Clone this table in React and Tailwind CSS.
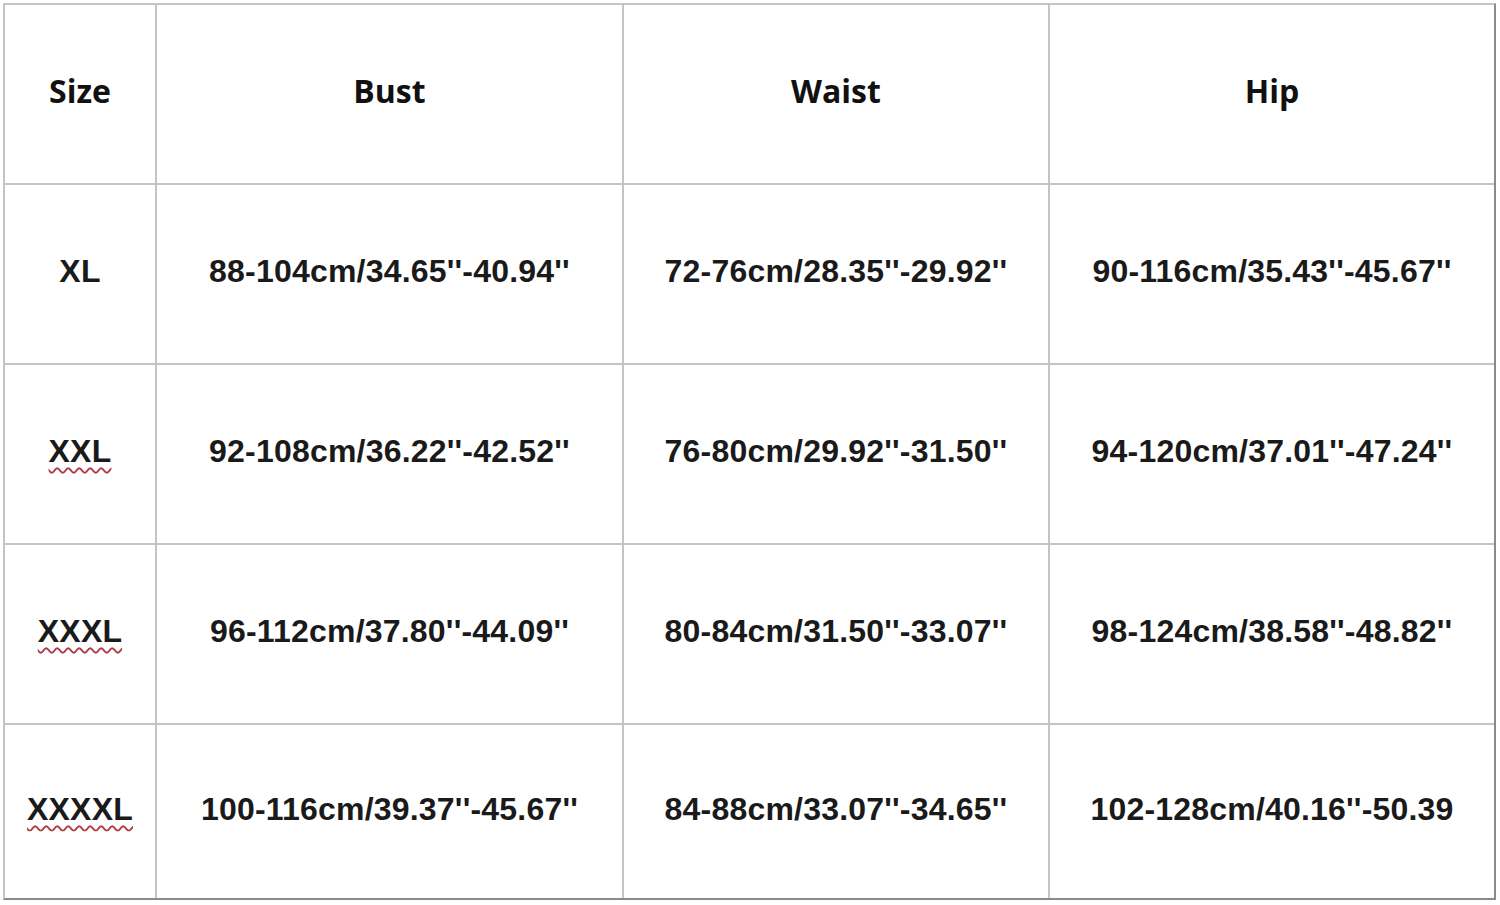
const rows = [
  ['XL', '88-104cm/34.65\'\'-40.94\'\'', '72-76cm/28.35\'\'-29.92\'\'', '90-116cm/35.43\'\'-45.67\'\'', false],
  ['XXL', '92-108cm/36.22\'\'-42.52\'\'', '76-80cm/29.92\'\'-31.50\'\'', '94-120cm/37.01\'\'-47.24\'\'', true],
  ['XXXL', '96-112cm/37.80\'\'-44.09\'\'', '80-84cm/31.50\'\'-33.07\'\'', '98-124cm/38.58\'\'-48.82\'\'', true],
  ['XXXXL', '100-116cm/39.37\'\'-45.67\'\'', '84-88cm/33.07\'\'-34.65\'\'', '102-128cm/40.16\'\'-50.39', true],
];

const head = "font-['Open_Sans',sans-serif] font-bold text-[32px] text-[#111]";
const body = "font-['Liberation_Sans',Arial,sans-serif] font-bold text-[32px] tracking-[0.2px] text-[#1a1a1a]";

export default function App() {
  return (
    <div className="w-[1500px] h-[905px] bg-white pt-[3px] pl-[3px]">
      <div className="w-[1493px] border-l-2 border-t-2 border-[#c4c4c4] border-r-2 border-r-[#8a8a8a] border-b-2 border-b-[#8a8a8a] bg-[#c4c4c4] grid grid-cols-[150px_465px_424px_444px] grid-rows-[178px_178px_178px_178px_173px] gap-[2px]">
        {['Size', 'Bust', 'Waist', 'Hip'].map((h) => (
          <div key={h} className={`bg-white flex items-center justify-center pb-[6px] ${head}`}>
            {h}
          </div>
        ))}
        {rows.map(([size, bust, waist, hip, wavy]) => (
          <div key={size} className="contents">
            <div className={`bg-white flex items-center justify-center pb-[6px] ${body}`}>
              <span className={wavy ? 'underline decoration-wavy decoration-[#b03a48] decoration-[1.5px] underline-offset-[5px]' : ''}>
                {size}
              </span>
            </div>
            <div className={`bg-white flex items-center justify-center pb-[6px] ${body}`}>{bust}</div>
            <div className={`bg-white flex items-center justify-center pb-[6px] ${body}`}>{waist}</div>
            <div className={`bg-white flex items-center justify-center pb-[6px] ${body}`}>{hip}</div>
          </div>
        ))}
      </div>
    </div>
  );
}
